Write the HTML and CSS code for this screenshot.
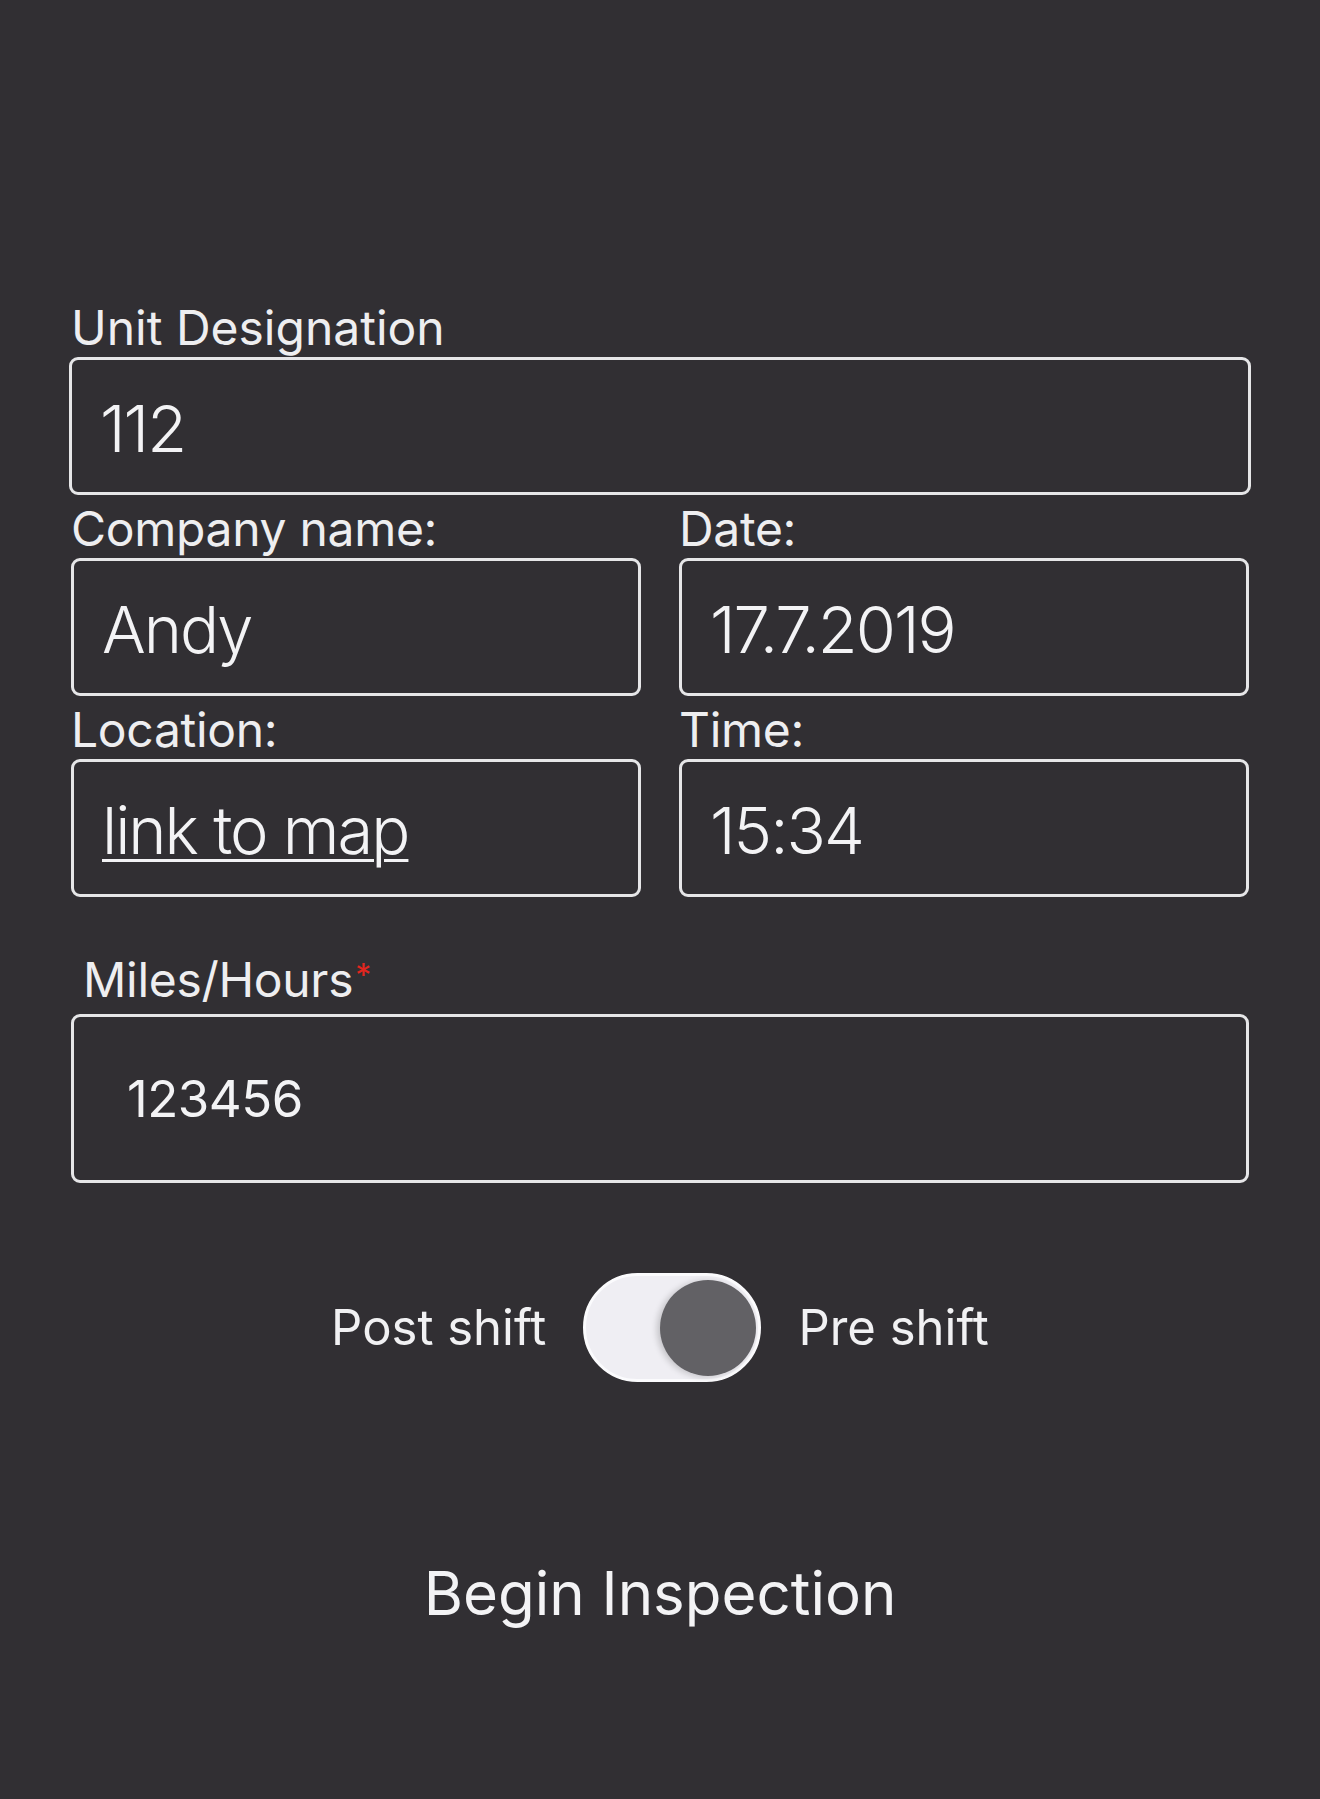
FILE: index.html
```html
<!DOCTYPE html>
<html lang="en">
<head>
<meta charset="utf-8">
<title>Inspection</title>
<link rel="stylesheet" href="styles.css">
</head>
<body>
<main class="form">
  <div class="field field-unit">
    <div class="label">Unit Designation</div>
    <div class="box"><span class="value">112</span></div>
  </div>
  <div class="grid">
    <div class="field">
      <div class="label">Company name:</div>
      <div class="box"><span class="value">Andy</span></div>
    </div>
    <div class="field">
      <div class="label">Date:</div>
      <div class="box"><span class="value">17.7.2019</span></div>
    </div>
    <div class="field">
      <div class="label">Location:</div>
      <div class="box"><a class="value link" href="#">link to map</a></div>
    </div>
    <div class="field">
      <div class="label">Time:</div>
      <div class="box"><span class="value">15:34</span></div>
    </div>
  </div>
  <div class="field miles">
    <div class="label miles-label">Miles/Hours<span class="req">*</span></div>
    <div class="box miles-box"><span class="miles-value">123456</span></div>
  </div>
  <div class="toggle-row">
    <span class="toggle-text">Post shift</span>
    <div class="toggle"><span class="knob"></span></div>
    <span class="toggle-text">Pre shift</span>
  </div>
  <div class="cta">Begin Inspection</div>
</main>
</body>
</html>
```

FILE: styles.css
```css
html, body {
  margin: 0;
  padding: 0;
  background: #312f33;
}

body {
  font-family: Inter, "Liberation Sans", Arial, sans-serif;
  color: #f1f1f3;
  min-height: 1799px;
}

.form {
  padding: 294px 71px 0;
}

.label {
  font-size: 48px;
  letter-spacing: -0.3px;
  line-height: 58px;
  height: 58px;
  padding-top: 5px;
  white-space: nowrap;
  color: #eeeef0;
}

.field-unit .label {
  letter-spacing: 0;
}

.box {
  box-sizing: border-box;
  height: 138px;
  border: 3px solid #e6e6e8;
  border-radius: 9px;
  display: flex;
  align-items: center;
  padding: 5px 0 0 28px;
}

.field-unit .box {
  margin: 0 -2px;
}

.value {
  font-weight: 300;
  font-size: 65px;
  letter-spacing: -2px;
  color: #f3f3f5;
  white-space: nowrap;
}

.link {
  text-decoration: underline;
  text-decoration-thickness: 3px;
  text-underline-offset: 5px;
}

.grid {
  display: grid;
  grid-template-columns: 1fr 1fr;
  column-gap: 38px;
}

.miles {
  margin-top: 49px;
}

.miles-label {
  padding-left: 12px;
  margin-bottom: 5px;
}

.req {
  color: #e3261f;
  font-size: 32px;
  vertical-align: top;
  line-height: 30px;
  margin-left: 2px;
  position: relative;
  top: 10px;
}

.miles-box {
  height: 169px;
  padding: 0 0 0 53px;
}

.miles-value {
  font-size: 51px;
  letter-spacing: -0.5px;
  color: #f3f3f5;
}

.toggle-row {
  margin-top: 90px;
  height: 109px;
  display: flex;
  align-items: center;
  justify-content: center;
  gap: 37px;
}

.toggle-text {
  font-size: 49px;
  color: #f1f1f3;
  white-space: nowrap;
}

.toggle {
  box-sizing: border-box;
  width: 178px;
  height: 109px;
  border-radius: 55px;
  background: #efeef3;
  border: 3px solid #fbfbfd;
  display: flex;
  align-items: center;
  justify-content: flex-end;
  padding-right: 2px;
}

.knob {
  width: 96px;
  height: 96px;
  border-radius: 50%;
  background: #626165;
  box-shadow: -3px 1px 6px rgba(0, 0, 0, 0.18);
}

.cta {
  margin-top: 174px;
  text-align: center;
  font-size: 60px;
  line-height: 74px;
  color: #f3f3f5;
}
```
